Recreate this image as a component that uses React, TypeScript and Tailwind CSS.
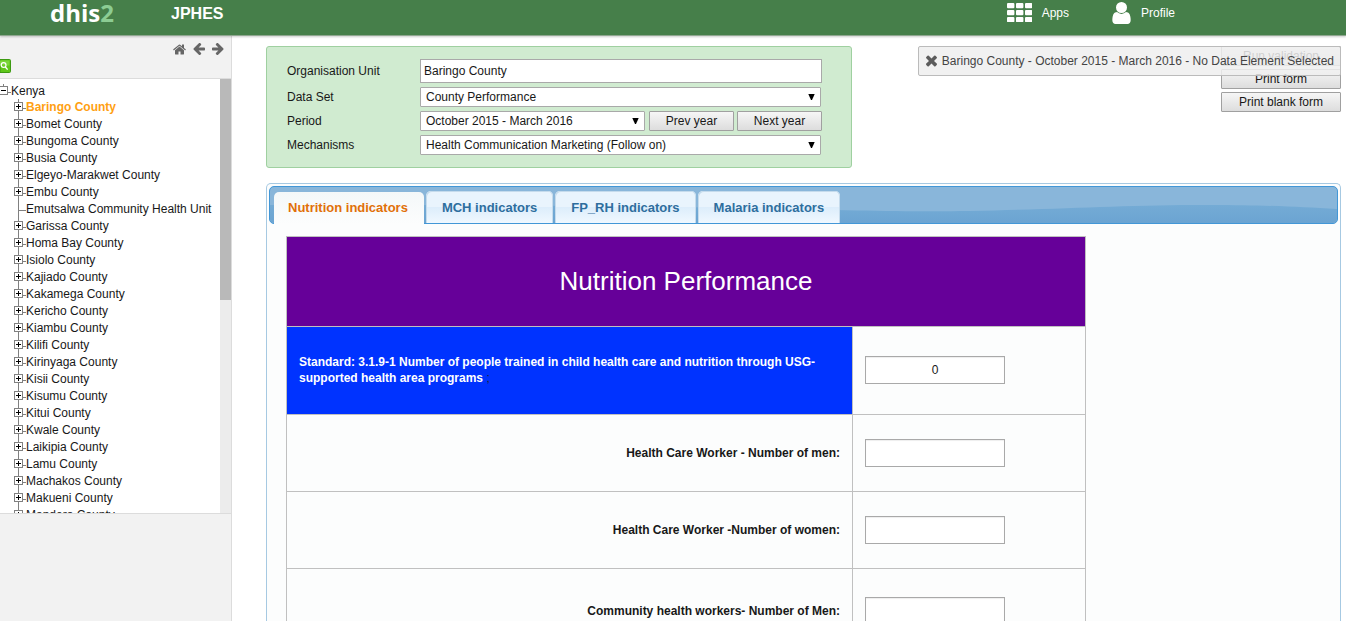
import React, { useState } from 'react';

const HOME =
  'M1408 544v-480q0 -26 -19 -45t-45 -19h-384v384h-256v-384h-384q-26 0 -45 19t-19 45v480q0 1 .5 3t.5 3l575 474l575 -474q1 -2 1 -6zM1631 613l-62 -74q-8 -9 -21 -11h-3q-13 0 -21 7l-692 577l-692 -577q-12 -8 -24 -7q-13 2 -21 11l-62 74q-8 10 -7 23.5t11 21.5l719 599q32 26 76 26t76 -26l244 -204v195q0 14 9 23t23 9h192q14 0 23 -9t9 -23v-408l219 -182q10 -8 11 -21.5t-7 -23.5z';
const ARROW =
  'M1536 640v128q0 53 -32.5 90.5t-84.5 37.5h-704l293 294q38 36 38 90t-38 90l-75 76q-37 37 -90 37q-52 0 -91 -37l-651 -652q-37 -37 -37 -90q0 -52 37 -91l651 -650q38 -38 91 -38q52 0 90 38l75 74q38 38 38 91t-38 91l-293 293h704q52 0 84.5 37.5t32.5 90.5z';
const USER =
  'M1280 137q0 -109 -62.5 -187t-150.5 -78h-854q-88 0 -150.5 78t-62.5 187q0 85 8.5 160.5t31.5 152t58.5 131t94 89t134.5 34.5q131 -128 313 -128t313 128q76 0 134.5 -34.5t94 -89t58.5 -131t31.5 -152t8.5 -160.5zM1024 1024q0 -159 -112.5 -271.5t-271.5 -112.5t-271.5 112.5t-112.5 271.5t112.5 271.5t271.5 112.5t271.5 -112.5t112.5 -271.5z';
const TIMES =
  'M1298 214q0 -40 -28 -68l-136 -136q-28 -28 -68 -28t-68 28l-294 294l-294 -294q-28 -28 -68 -28t-68 28l-136 136q-28 28 -28 68t28 68l294 294l-294 294q-28 28 -28 68t28 68l136 136q28 28 68 28t68 -28l294 -294l294 294q28 28 68 28t68 -28l136 -136q28 -28 28 -68t-28 -68l-294 -294l294 -294q28 -28 28 -68z';

function Glyph({ d, box, className, flip = false }: { d: string; box: string; className: string; flip?: boolean }) {
  return (
    <svg viewBox={box} className={className} fill="currentColor" aria-hidden="true">
      <g transform={flip ? 'translate(1536 1408) scale(-1 -1)' : 'translate(0 1408) scale(1 -1)'}>
        <path d={d} />
      </g>
    </svg>
  );
}

function GridIcon() {
  return (
    <svg width="25" height="19" viewBox="0 0 25 19" fill="currentColor" aria-hidden="true">
      {[0, 7, 14].map((y) =>
        [0, 9, 18].map((x) => <rect key={`${x}-${y}`} x={x} y={y} width="7.4" height="5.2" rx="1" />),
      )}
    </svg>
  );
}

type NodeKind = 'open' | 'closed' | 'leaf';

function Branch({ kind }: { kind: NodeKind }) {
  return (
    <svg width="12" height="17" viewBox="0 0 12 17" className="shrink-0" shapeRendering="crispEdges" aria-hidden="true">
      <path d={kind === 'open' ? 'M4.5 1v4' : 'M4.5 0v17'} stroke="#808080" />
      <path d={kind === 'leaf' ? 'M5 9.5h8' : 'M9 9.5h4'} stroke="#808080" />
      {kind !== 'leaf' && (
        <>
          <rect x="0.5" y="3.5" width="8" height="8" fill="#fff" stroke="#808080" />
          <path d="M2 7.5h5" stroke="#000" />
          {kind === 'closed' && <path d="M4.5 5v5" stroke="#000" />}
        </>
      )}
    </svg>
  );
}

const units = [
  'Baringo County',
  'Bomet County',
  'Bungoma County',
  'Busia County',
  'Elgeyo-Marakwet County',
  'Embu County',
  'Emutsalwa Community Health Unit',
  'Garissa County',
  'Homa Bay County',
  'Isiolo County',
  'Kajiado County',
  'Kakamega County',
  'Kericho County',
  'Kiambu County',
  'Kilifi County',
  'Kirinyaga County',
  'Kisii County',
  'Kisumu County',
  'Kitui County',
  'Kwale County',
  'Laikipia County',
  'Lamu County',
  'Machakos County',
  'Makueni County',
  'Mandera County',
];

function Sidebar() {
  return (
    <aside className="flex w-[232px] shrink-0 flex-col border-r border-[#dcdcdc] bg-[#f2f2f2]">
      <div className="flex h-[43px] shrink-0 flex-col justify-between border-b border-[#dcdcdc] pt-[7px] pb-[5px]">
        <div className="flex items-center justify-end gap-[7px] pr-[7px] text-[#666]">
          <button type="button" aria-label="Home">
            <Glyph d={HOME} box="0 0 1664 1536" className="h-[13px] w-[13px]" />
          </button>
          <button type="button" aria-label="Back">
            <Glyph d={ARROW} box="0 0 1536 1536" className="h-[13px] w-3" />
          </button>
          <button type="button" aria-label="Forward">
            <Glyph d={ARROW} box="0 0 1536 1536" className="h-[13px] w-3" flip />
          </button>
        </div>
        <button type="button" aria-label="Search" className="w-[11px]">
          <svg width="11" height="14" viewBox="0 0 11 14" aria-hidden="true">
            <path d="M0 .5h9.5q1 0 1 1v11q0 1-1 1H0z" fill="#5fc61a" stroke="#3d9a12" />
            <path d="M0 1.5h9.5v5H0z" fill="#7bd63a" />
            <circle cx="3.6" cy="6" r="2.4" fill="none" stroke="#fff" strokeWidth="1.2" />
            <path d="M5.2 7.8l2.4 2.8" stroke="#fff" strokeWidth="1.4" />
          </svg>
        </button>
      </div>
      <div className="flex h-[435px] shrink-0 border-b border-[#dcdcdc] bg-white">
        <nav aria-label="Organisation units" className="min-w-0 flex-1 overflow-hidden pt-1 leading-[17px] whitespace-nowrap">
          <div className="flex h-4">
            <span className="flex w-[11px] shrink-0 justify-end">
              <Branch kind="open" />
            </span>
            <a href="#kenya">Kenya</a>
          </div>
          <ul className="pl-[14px]">
            {units.map((u, i) => (
              <li key={u} className="flex">
                <Branch kind={u.startsWith('Emutsalwa') ? 'leaf' : 'closed'} />
                <a href={`#unit-${i}`} className={i === 0 ? 'font-bold text-[#ffa012]' : ''}>
                  {u}
                </a>
              </li>
            ))}
          </ul>
        </nav>
        <div className="w-[11px] shrink-0 bg-[#ececec]">
          <div className="h-[221px] bg-[#b9b9b9]" />
        </div>
      </div>
    </aside>
  );
}

function Select({ id, value, className }: { id: string; value: string; className: string }) {
  return (
    <div className={`relative ${className}`}>
      <select
        id={id}
        defaultValue={value}
        className="block h-5 w-full appearance-none rounded-[1px] border border-[#a9a9a9] bg-white pr-5 pl-[5px] leading-[18px]"
      >
        <option>{value}</option>
      </select>
      <svg width="7" height="6" viewBox="0 0 7 6" className="pointer-events-none absolute top-[7px] right-[6px]" aria-hidden="true">
        <path d="M.3 0h6.4L4 6H3z" />
      </svg>
    </div>
  );
}

function Button({ children, className }: { children: React.ReactNode; className: string }) {
  return (
    <button
      type="button"
      className={`h-5 shrink-0 rounded-[1px] border border-[#a0a0a0] bg-linear-to-b from-[#f6f6f6] to-[#dddddd] leading-[18px] ${className}`}
    >
      {children}
    </button>
  );
}

function Selection() {
  return (
    <form className="grid w-[586px] shrink-0 grid-cols-[133px_402px] items-center gap-y-1 rounded-[3px] border border-[#9fd0a0] bg-[#d0ebd0] py-3 pl-5">
      <label htmlFor="org">Organisation Unit</label>
      <input id="org" readOnly value="Baringo County" className="h-6 w-full border border-[#a9a9a9] bg-white px-[3px]" />
      <label htmlFor="dataset">Data Set</label>
      <Select id="dataset" value="County Performance" className="w-[401px]" />
      <label htmlFor="period">Period</label>
      <div className="flex justify-between">
        <Select id="period" value="October 2015 - March 2016" className="w-[225px]" />
        <div className="flex gap-[3px]">
          <Button className="w-[85px]">Prev year</Button>
          <Button className="w-[85px]">Next year</Button>
        </div>
      </div>
      <label htmlFor="mechanisms">Mechanisms</label>
      <Select id="mechanisms" value="Health Communication Marketing (Follow on)" className="w-[401px]" />
    </form>
  );
}

const tabs = ['Nutrition indicators', 'MCH indicators', 'FP_RH indicators', 'Malaria indicators'];

function TabBar() {
  const [active, setActive] = useState(0);
  return (
    <div role="tablist" className="relative flex h-[38px] items-end gap-[2px] rounded-[5px] border border-[#4297d7] bg-[#89b6da] pl-1">
      <svg viewBox="0 0 1068 36" preserveAspectRatio="none" className="absolute inset-0 h-full w-full rounded-[4px]" aria-hidden="true">
        <defs>
          <linearGradient id="wave" x1="0" y1="0" x2="0" y2="1">
            <stop offset="0" stopColor="#74abd5" />
            <stop offset="1" stopColor="#6ba4d2" />
          </linearGradient>
        </defs>
        <path d="M0 18C120 18 260 18 400 20C560 22 610 25 700 24C800 22 850 18 940 18C1000 18 1030 20 1068 22V36H0z" fill="url(#wave)" />
      </svg>
      {tabs.map((t, i) => (
        <button
          key={t}
          type="button"
          role="tab"
          aria-selected={i === active}
          onClick={() => setActive(i)}
          className={`relative h-8 rounded-t-[5px] text-[13px] font-bold ${
            i === active
              ? '-mb-px bg-linear-to-b from-[#f4f8f9] to-[#fcfdfd] pr-4 pl-[14px] text-[#e17009]'
              : 'bg-linear-to-b from-[#e9f4fd] from-50% via-[#dcedfb] via-50% to-[#f0f8ff] px-4 pt-[2px] text-[#2e6e9e] shadow-[inset_1px_1px_0_#c5dbec,inset_-1px_0_0_#c5dbec]'
          }`}
        >
          {t}
        </button>
      ))}
    </div>
  );
}

const rows = [
  { id: 'men', label: 'Health Care Worker - Number of men:', height: 'h-[77px]' },
  { id: 'women', label: 'Health Care Worker -Number of women:', height: 'h-[77px]' },
  { id: 'chw-men', label: 'Community health workers- Number of Men:', height: 'h-[84px]' },
];

const field = 'block h-7 w-[140px] border border-[#a9a9a9] bg-white text-center shadow-[inset_0_1px_1px_rgba(0,0,0,0.07)]';

function Indicators() {
  return (
    <table className="w-[800px] table-fixed border-collapse">
      <colgroup>
        <col className="w-[566px]" />
        <col />
      </colgroup>
      <thead>
        <tr className="h-[90px]">
          <th colSpan={2} className="border border-[#c0c0c0] bg-[#660099] text-[26px] font-normal text-white">
            Nutrition Performance
          </th>
        </tr>
      </thead>
      <tbody>
        <tr className="h-[88px]">
          <th scope="row" className="border border-[#c0c0c0] bg-[#0033ff] px-3 pb-[2px] text-left leading-4 text-white">
            <label htmlFor="standard">
              Standard: 3.1.9-1 Number of people trained in child health care and nutrition through USG-supported health area programs{' '}
              <span className="font-normal text-[#222]">;</span>
            </label>
          </th>
          <td className="border border-[#c0c0c0] px-3 pb-[2px]">
            <input id="standard" defaultValue="0" className={field} />
          </td>
        </tr>
        {rows.map((r) => (
          <tr key={r.id} className={r.height}>
            <th scope="row" className="border border-[#c0c0c0] px-3 text-right">
              <label htmlFor={r.id}>{r.label}</label>
            </th>
            <td className="border border-[#c0c0c0] px-3">
              <input id={r.id} className={field} />
            </td>
          </tr>
        ))}
      </tbody>
    </table>
  );
}

export default function App() {
  return (
    <div className="flex h-screen flex-col overflow-hidden bg-white font-['Liberation_Sans',Arial,sans-serif] text-[12px] text-[#181818]">
      <header className="z-10 flex h-9 shrink-0 items-center border-b border-[#8fa790] bg-[#467f4a] pr-[171px] pb-[10px] pl-[50px] text-white shadow-[0_1px_2px_rgba(0,0,0,0.2)]">
        <a href="#home" className="w-[121px] font-['Open_Sans',sans-serif] text-[24px] leading-6 font-bold">
          dhis<span className="text-[#8ccc93]">2</span>
        </a>
        <h1 className="flex-1 pt-[2px] text-[16px] font-bold">JPHES</h1>
        <nav className="flex items-center gap-[43px]">
          <a href="#apps" className="flex items-center gap-[10px]">
            <GridIcon />
            Apps
          </a>
          <a href="#profile" className="flex items-center gap-[10px]">
            <Glyph d={USER} box="0 0 1280 1536" className="h-[22px] w-[19px]" />
            Profile
          </a>
        </nav>
      </header>
      <div className="flex min-h-0 flex-1">
        <Sidebar />
        <main className="relative flex min-w-0 flex-1 flex-col pt-[10px] pr-[5px] pl-[34px]">
          <div className="flex items-start justify-between">
            <Selection />
            <div className="flex w-[120px] flex-col gap-[3px]">
              <Button className="w-full">Run validation</Button>
              <Button className="w-full">Print form</Button>
              <Button className="w-full">Print blank form</Button>
            </div>
          </div>
          <div role="status" className="absolute top-[10px] right-[5px] flex h-[30px] items-center gap-1 rounded-[2px] border border-[#bbb] bg-[#eeeeee]/85 px-[6px] whitespace-nowrap text-[#444]">
            <button type="button" aria-label="Close" className="text-[#5c5c5c]">
              <Glyph d={TIMES} box="0 128 1408 1536" className="h-[15px] w-[13px]" />
            </button>
            Baringo County - October 2015 - March 2016 - No Data Element Selected
          </div>
          <section className="mt-[15px] flex-1 shrink-0 rounded-t-[5px] border border-b-0 border-[#a6c9e2] bg-[#fcfdfd] p-[2px]">
            <TabBar />
            <div className="px-[17px] pt-3">
              <Indicators />
            </div>
          </section>
        </main>
      </div>
    </div>
  );
}
